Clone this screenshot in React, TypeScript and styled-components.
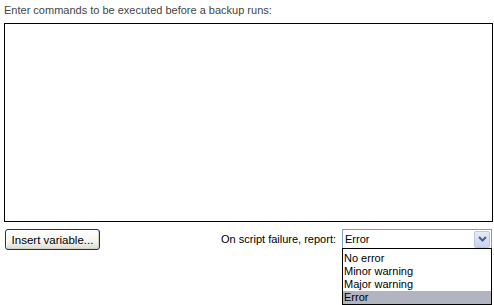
import React from 'react';
import styled, { createGlobalStyle } from 'styled-components';

const GlobalStyle = createGlobalStyle`
  html, body {
    margin: 0;
    padding: 0;
    background: #ffffff;
  }
  body {
    font-family: "Liberation Sans", Arial, sans-serif;
    font-size: 11px;
    color: #000;
  }
`;

const Page = styled.div`
  width: 494px;
  height: 305px;
  box-sizing: border-box;
  padding: 3px 2px 0 4px;
  display: flex;
  flex-direction: column;
  overflow: hidden;
`;

const Caption = styled.div`
  height: 20px;
  line-height: 14px;
  color: #444;
  font-size: 11px;
`;

const Commands = styled.textarea`
  display: block;
  width: 489px;
  height: 199px;
  box-sizing: border-box;
  border: 1px solid #000;
  margin: 0;
  padding: 2px;
  resize: none;
  outline: none;
  font-family: inherit;
  font-size: 11px;
`;

const Footer = styled.div`
  display: flex;
  align-items: flex-start;
  justify-content: space-between;
  margin-top: 7px;
`;

const XpButton = styled.button`
  width: 95px;
  height: 21px;
  margin-left: 1px;
  box-sizing: border-box;
  border: 1px solid #003c74;
  border-radius: 3px;
  background: linear-gradient(#ffffff 0%, #f4f4f0 60%, #dcdcd4 100%);
  box-shadow: inset -1px -1px 0 #d6d0c5, inset 1px 1px 0 #fff;
  font-family: inherit;
  font-size: 11.5px;
  color: #000;
  padding: 0;
`;

const ReportGroup = styled.div`
  display: flex;
  align-items: center;
  gap: 6px;
`;

const ReportLabel = styled.span`
  font-size: 11px;
  color: #000;
`;

const ComboWrap = styled.div`
  position: relative;
  width: 150px;
`;

const Combo = styled.div`
  height: 20px;
  box-sizing: border-box;
  border: 1px solid #7f9db9;
  display: flex;
  align-items: center;
  padding-left: 2px;
  background: #fff;
`;

const ComboText = styled.span`
  flex: 1;
  font-size: 11px;
`;

const ArrowBox = styled.span`
  width: 16px;
  height: 17px;
  margin-right: 1px;
  box-sizing: border-box;
  border: 1px solid #b9c8e8;
  border-radius: 2px;
  background: linear-gradient(#e6ebf7, #c6d3f0);
  display: flex;
  align-items: center;
  justify-content: center;
`;

const DropList = styled.ul`
  position: absolute;
  left: 0;
  top: 19px;
  width: 150px;
  margin: 0;
  padding: 3px 0 0;
  box-sizing: border-box;
  border: 1px solid #000;
  background: #fff;
  list-style: none;
`;

const Option = styled.li<{ $selected?: boolean }>`
  height: 13px;
  line-height: 13px;
  padding-left: 1px;
  font-size: 11px;
  background: ${p => (p.$selected ? '#b2b4bf' : '#fff')};
`;

const options = ['No error', 'Minor warning', 'Major warning', 'Error'];

export default function App() {
  return (
    <>
      <GlobalStyle />
      <Page>
        <Caption>Enter commands to be executed before a backup runs:</Caption>
        <Commands defaultValue="" />
        <Footer>
          <XpButton>Insert variable...</XpButton>
          <ReportGroup>
            <ReportLabel>On script failure, report:</ReportLabel>
            <ComboWrap>
              <Combo>
                <ComboText>Error</ComboText>
                <ArrowBox>
                  <svg width="9" height="6" viewBox="0 0 9 6">
                    <path d="M1 1 L4.5 4.5 L8 1" stroke="#4d6185" strokeWidth="2" fill="none" />
                  </svg>
                </ArrowBox>
              </Combo>
              <DropList>
                {options.map(o => (
                  <Option key={o} $selected={o === 'Error'}>{o}</Option>
                ))}
              </DropList>
            </ComboWrap>
          </ReportGroup>
        </Footer>
      </Page>
    </>
  );
}
